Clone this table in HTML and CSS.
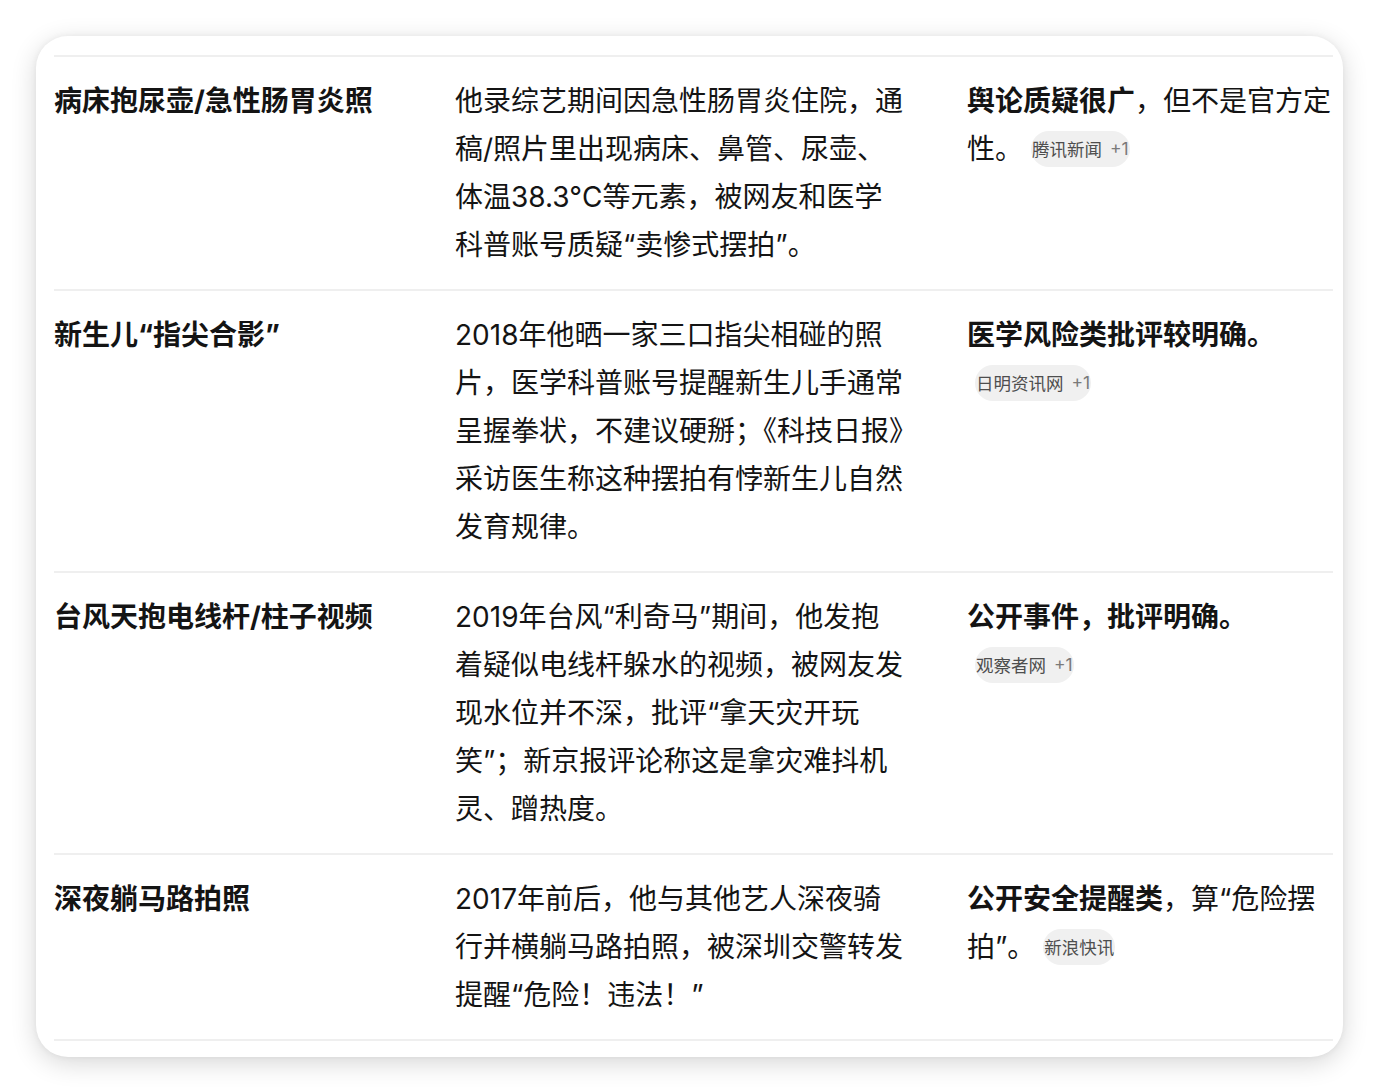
FILE: index.html
```html
<!DOCTYPE html>
<html lang="zh-CN">
<head>
<meta charset="utf-8">
<title>表格</title>
<link rel="stylesheet" href="styles.css">
</head>
<body>
<div class="page">
  <div class="card">
    <table class="tbl">
      <colgroup>
        <col class="c1"><col class="c2"><col class="c3">
      </colgroup>
      <tbody>
        <tr>
          <td class="name">病床抱尿壶/急性肠胃炎照</td>
          <td class="desc">他录综艺期间因急性肠胃炎住院，通稿/照片里出现病床、鼻管、尿壶、体温38.3°C等元素，被网友和医学科普账号质疑“卖惨式摆拍”。</td>
          <td class="verdict"><b>舆论质疑很广</b>，但不是官方定性。<span class="src">腾讯新闻<span class="more">+1</span></span></td>
        </tr>
        <tr>
          <td class="name">新生儿“指尖合影”</td>
          <td class="desc">2018年他晒一家三口指尖相碰的照片，医学科普账号提醒新生儿手通常呈握拳状，不建议硬掰；《科技日报》采访医生称这种摆拍有悖新生儿自然发育规律。</td>
          <td class="verdict"><b>医学风险类批评较明确。</b><span class="src">日明资讯网<span class="more">+1</span></span></td>
        </tr>
        <tr>
          <td class="name">台风天抱电线杆/柱子视频</td>
          <td class="desc">2019年台风“利奇马”期间，他发抱着疑似电线杆躲水的视频，被网友发现水位并不深，批评“拿天灾开玩笑”；新京报评论称这是拿灾难抖机灵、蹭热度。</td>
          <td class="verdict"><b>公开事件，批评明确。</b><span class="src">观察者网<span class="more">+1</span></span></td>
        </tr>
        <tr>
          <td class="name">深夜躺马路拍照</td>
          <td class="desc">2017年前后，他与其他艺人深夜骑行并横躺马路拍照，被深圳交警转发提醒“危险！违法！”</td>
          <td class="verdict"><b>公开安全提醒类</b>，算“危险摆拍”。<span class="src">新浪快讯</span></td>
        </tr>
      </tbody>
    </table>
  </div>
</div>
</body>
</html>
```

FILE: styles.css
```css
html, body {
  margin: 0;
  padding: 0;
  background: #ffffff;
}

.page {
  padding: 36px 37px 37px 36px;
}

.card {
  width: 1307px;
  box-sizing: border-box;
  background: #ffffff;
  border-radius: 32px;
  box-shadow: 0 6px 26px rgba(0, 0, 0, 0.16), 0 0 6px rgba(0, 0, 0, 0.05);
  padding: 19px 10px 16px 18px;
  overflow: hidden;
}

.tbl {
  width: 1279px;
  border-collapse: collapse;
  table-layout: fixed;
  font-family: Inter, "Noto Sans CJK SC", sans-serif;
  font-size: 28px;
  line-height: 48px;
  color: #141414;
}

.c1 { width: 401px; }
.c2 { width: 512px; }
.c3 { width: 366px; }

.tbl td {
  vertical-align: top;
  padding: 20px 0 20px 0;
  border-top: 2px solid #efefef;
  border-bottom: 2px solid #efefef;
}

.name {
  font-weight: 700;
  padding-right: 20px !important;
}

.desc {
  padding-right: 62px !important;
}

.verdict b {
  font-weight: 700;
}

.src {
  display: inline-flex;
  align-items: center;
  gap: 8px;
  height: 36px;
  padding: 0 1px;
  margin-left: 8px;
  border-radius: 18px;
  background: #f0f0f0;
  font-family: "Noto Sans CJK SC", sans-serif;
  font-size: 17.5px;
  line-height: 36px;
  color: #4e4e4e;
  vertical-align: 3px;
  white-space: nowrap;
}

.more {
  font-family: Inter, "Noto Sans CJK SC", sans-serif;
  color: #7a7a7a;
}
```
